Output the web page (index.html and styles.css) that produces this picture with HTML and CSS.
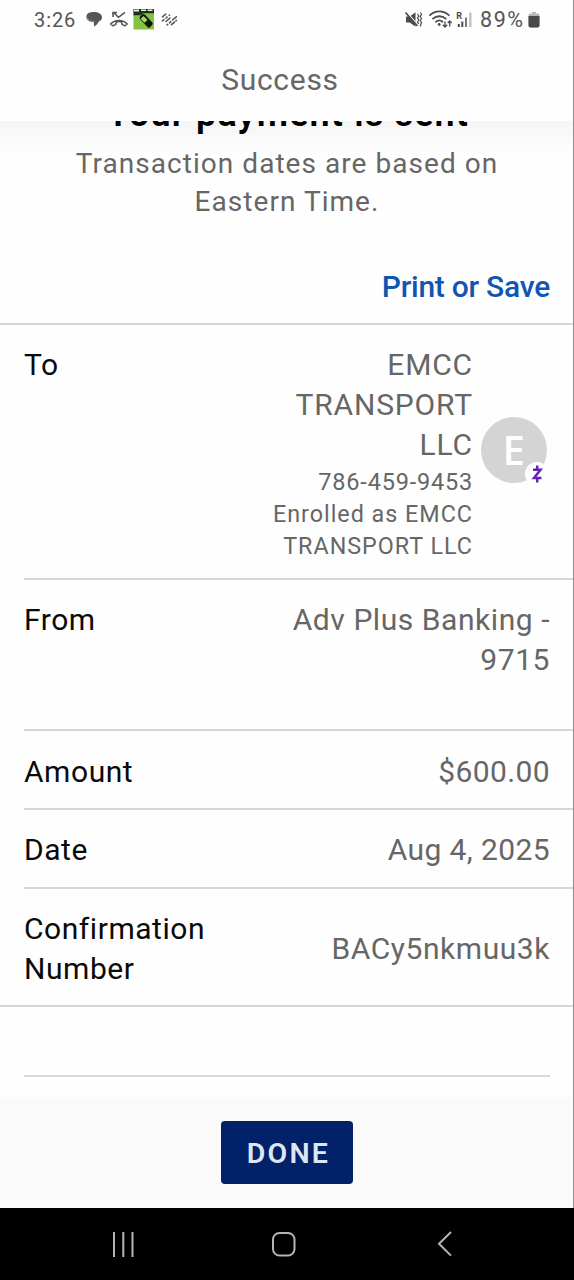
FILE: index.html
```html
<!DOCTYPE html>
<html lang="en">
<head>
<meta charset="utf-8">
<title>Success</title>
<link rel="stylesheet" href="styles.css">
</head>
<body>
<div class="screen">
  <header class="header">
    <div class="status">
      <span class="clock">3:26</span>
      <svg class="status-left" width="94" height="24" viewBox="84 8 94 24">
        <path d="M93.500 12c-3.500 0-6 1.200-6.900 3.200-1 3.300 1.400 6.300 5.400 6.900l1.800.1c.3 1.800.4 3 .1 4.300 2-.8 3.600-2.200 4.600-4.700 2.200-.6 3.500-2.400 3.500-4.500 0-3.300-3.500-5.300-8.500-5.300z" fill="#555"/>
        <path d="M87 17.500c1.500 3 4 4.200 7.500 4" fill="none" stroke="#aaa" stroke-width=".7"/>
        <path d="M113.500 12.500l5 4.800 6.500-5M113 17v-4.500h4" fill="none" stroke="#555" stroke-width="1.600"/>
        <path d="M110.500 24c4.300-4.800 12.500-4.800 16.800 0l-2.500 1.800-3-1.700v-2.100c-1.900-.6-3.900-.6-5.800 0v2.100l-3 1.700z" fill="none" stroke="#555" stroke-width="1.500" stroke-linejoin="round"/>
        <path d="M133.500 9h20.500v20.500h-20.500z" fill="#83c341"/>
        <path d="M133.500 9h20.500v4.200h-11l-2 2h-7.500z" fill="#1c3317"/>
        <path d="M134 9.500h5v2h-5zM141 9.500h5v1.500h-5zM147.500 9.500h5v1.500h-5z" fill="#e8f5d8"/>
        <path d="M142 14.500q1.500-1 3 .3l7.300 7.700q1 1.200 0 2.300l-2.300 2.400q-1.200 1-2.300 0l-7.700-8.200q-1-1.200 0-2.300z" fill="#0d170a"/>
        <path d="M143.500 16l4 4-3 2.800-3.800-4z" fill="#a4d868"/>
        <g stroke="#555" stroke-width="1.600" stroke-linecap="round" fill="none">
          <path d="M162.500 16.800l3.300-2.800M162.500 20.800l1.500-1.300M166 18l1-.9M169.200 15.300l.3-.3M166 21.500l4-3.500M167 25l.7-.6M169.500 22.800l1.300-1.100M172.500 20l3.800-3.200M171.500 24.700l3-2.600M176 20.700l.4-.3"/>
        </g>
      </svg>
      <svg class="status-right" width="68" height="24" viewBox="404 8 68 24">
        <path d="M406 16.500h3.800l5.700-4.300v14.600l-5.700-4.300h-3.800z" fill="#4c4c4c"/>
        <path d="M406.500 12l12 13.500" stroke="#fff" stroke-width="1.200"/>
        <path d="M405.500 12.500l12 13.500" stroke="#4c4c4c" stroke-width="1.700"/>
        <path d="M417.500 14l1.300 2-1.300 2 1.300 2-1.300 2 1.300 2M420.500 12.500l1 2-1.300 2 1.300 2-1.300 2 1.300 2-1.300 4" fill="none" stroke="#4c4c4c" stroke-width="1.200"/>
        <g fill="none" stroke="#4c4c4c" stroke-width="1.800" stroke-linecap="round">
          <path d="M430 15.200c5.200-5 13.500-5 18.800 0M433 18.700c3.500-3.300 9.200-3.300 12.800 0M436 21.700c2-1.700 4.500-1.700 6.500 0"/>
        </g>
        <circle cx="439.200" cy="24.500" r="1.400" fill="#4c4c4c"/>
        <path d="M445 21.500v5.500m-2.200-2.200l2.200 2.200 2.200-2.200M449.700 26.500v-5.500m-2 2l2-2 2 2" fill="none" stroke="#4c4c4c" stroke-width="1.300"/>
        <text x="456.200" y="18.500" class="roaming">R</text>
        <path d="M458.800 24v3M462.300 21.500v5.500" stroke="#4c4c4c" stroke-width="2"/>
        <path d="M466 17.500v9.500" stroke="#777" stroke-width="2"/>
        <path d="M470.300 12.500v14.500" stroke="#c4c4c4" stroke-width="2.500"/>
      </svg>
      <span class="percent">89%</span>
      <svg class="battery" width="12" height="16" viewBox="0 0 12 16">
        <path d="M4 0h4v1.500h-4z" fill="#aaa"/>
        <rect x=".5" y="1.500" width="11" height="14" rx="2" fill="#b5b5b5"/>
        <path d="M.5 4h11v9.500a2 2 0 0 1-2 2h-7a2 2 0 0 1-2-2z" fill="#4a4a4a"/>
      </svg>
    </div>
    <h1 class="title">Success</h1>
  </header>
  <main class="content">
    <div class="intro">
      <h2 class="headline">Your payment is sent</h2>
      <p class="note">Transaction dates are based on<br>Eastern Time.</p>
      <a class="print">Print or Save</a>
    </div>
    <section class="rows">
      <div class="row row-to">
        <span class="label">To</span>
        <div class="payee">
          <div class="payee-name">EMCC<br>TRANSPORT<br>LLC</div>
          <div class="payee-phone">786-459-9453</div>
          <div class="payee-alias">Enrolled as EMCC<br>TRANSPORT LLC</div>
        </div>
        <div class="avatar">E
          <svg class="badge" width="24" height="24" viewBox="0 0 24 24">
            <circle cx="12" cy="12" r="12" fill="#fff"/>
            <path d="M8 7.800h7.500l-6.500 8.200h7.500M12.200 3.500v4M12.200 16v4.500" fill="none" stroke="#6420b8" stroke-width="2.500"/>
          </svg>
        </div>
      </div>
      <div class="row row-from"><span class="label">From</span><span class="value">Adv Plus Banking -<br>9715</span></div>
      <div class="row row-low"><span class="label">Amount</span><span class="value amount">$600.00</span></div>
      <div class="row"><span class="label">Date</span><span class="value date">Aug 4, 2025</span></div>
      <div class="row row-conf"><span class="label">Confirmation<br>Number</span><span class="value code">BACy5nkmuu3k</span></div>
    </section>
    <div class="spacer"></div>
  </main>
  <footer class="footer"><button class="done">DONE</button></footer>
  <nav class="nav">
    <svg width="574" height="72" viewBox="0 0 574 72" fill="none" stroke="#b4b4b4" stroke-width="2">
      <path d="M114 24v25M123.300 24v25M132.500 24v25"/>
      <rect x="273" y="25" width="21.500" height="22.500" rx="6.500"/>
      <path d="M451 24l-12 11.800 12 11.800"/>
    </svg>
  </nav>
</div>
</body>
</html>
```
FILE: styles.css
```css
* { box-sizing: border-box; }
body { margin: 0; background: #fff; font-family: Roboto, "Liberation Sans", sans-serif; }
.screen { position: relative; width: 574px; height: 1280px; display: flex; flex-direction: column; overflow: hidden; background: #fefefe; }
.screen::after { content: ""; position: absolute; top: 0; right: 0; width: 1px; height: 1208px; background: #8f8f8f; }
.header { height: 121px; flex: none; background: #fefefe; }
.status { height: 40px; display: flex; align-items: center; padding: 0 34px; color: #555; font-size: 20px; }
.clock { width: 50px; letter-spacing: .9px; }
.status-left { flex: none; }
.status-right { flex: none; margin-left: 226px; }
.roaming { font: bold 9px Roboto, sans-serif; fill: #4c4c4c; }
.percent { margin: -2px 0 0 8px; width: 48px; font-size: 21.500px; letter-spacing: 1.600px; white-space: nowrap; }
.battery { flex: none; }
.title { margin: 0; height: 80px; line-height: 79px; text-align: center; font-size: 30px; font-weight: 400; letter-spacing: .7px; color: #666; padding-right: 14px; }
.content { flex: none; height: 976px; overflow: hidden; }
.intro { height: 202px; display: flex; flex-direction: column; background: linear-gradient(#f5f5f5, #fefefe 34px); }
.headline { margin: -32px 0 0; padding-left: 2px; height: 50px; line-height: 50px; text-align: center; font-size: 36px; font-weight: 600; color: #000; letter-spacing: 1.150px; white-space: nowrap; }
.note { margin: 6px 0 0; text-align: center; font-size: 28px; line-height: 37.500px; letter-spacing: 1.050px; color: #666; white-space: nowrap; }
.print { align-self: flex-end; margin: 47px 24px 0 0; line-height: 40px; font-size: 30px; font-weight: 500; color: #1155b2; letter-spacing: -.25px; }
.rows { border-top: 2px solid #d6d6d6; border-bottom: 2px solid #d6d6d6; }
.row { display: flex; height: 79px; margin-left: 24px; padding: 20px 24px 0 0; border-bottom: 2px solid #d6d6d6; font-size: 30px; line-height: 40px; letter-spacing: .55px; }
.row:last-child { border-bottom: 0; }
.label { flex: none; color: #0a0a0a; }
.value { margin-left: auto; text-align: right; color: #666; }
.amount, .date { letter-spacing: .4px; }
.row-to { height: 255px; }
.row-from { height: 151px; }
.row-low { padding-top: 21px; }
.row-conf { height: 116px; }
.code { align-self: flex-start; margin-top: 20px; }
.payee { margin-left: auto; text-align: right; color: #666; }
.payee-name { letter-spacing: .85px; }
.payee-phone { font-size: 23.500px; line-height: 34px; letter-spacing: .8px; }
.payee-alias { font-size: 23.300px; line-height: 31.500px; letter-spacing: 1px; }
.avatar { position: relative; flex: none; width: 66px; height: 66px; margin: 72px 3px 0 8px; border-radius: 50%; background: #d4d4d4; color: #fff; font: 600 40px/66px "Open Sans", sans-serif; text-align: center; }
.badge { position: absolute; left: 44px; top: 45px; }
.spacer { height: 70px; margin: 0 24px; border-bottom: 2px solid #dadada; }
.footer { height: 111px; flex: none; background: #fafafa; display: flex; justify-content: center; align-items: flex-start; padding-top: 24px; }
.done { width: 132px; height: 63px; padding: 2px 0 0 3px; border: 0; border-radius: 4px; background: #012169; color: #dfe6f3; font: 600 28.500px Roboto, sans-serif; letter-spacing: 2.200px; }
.nav { height: 72px; flex: none; background: #000; }
.nav svg { display: block; }
```
